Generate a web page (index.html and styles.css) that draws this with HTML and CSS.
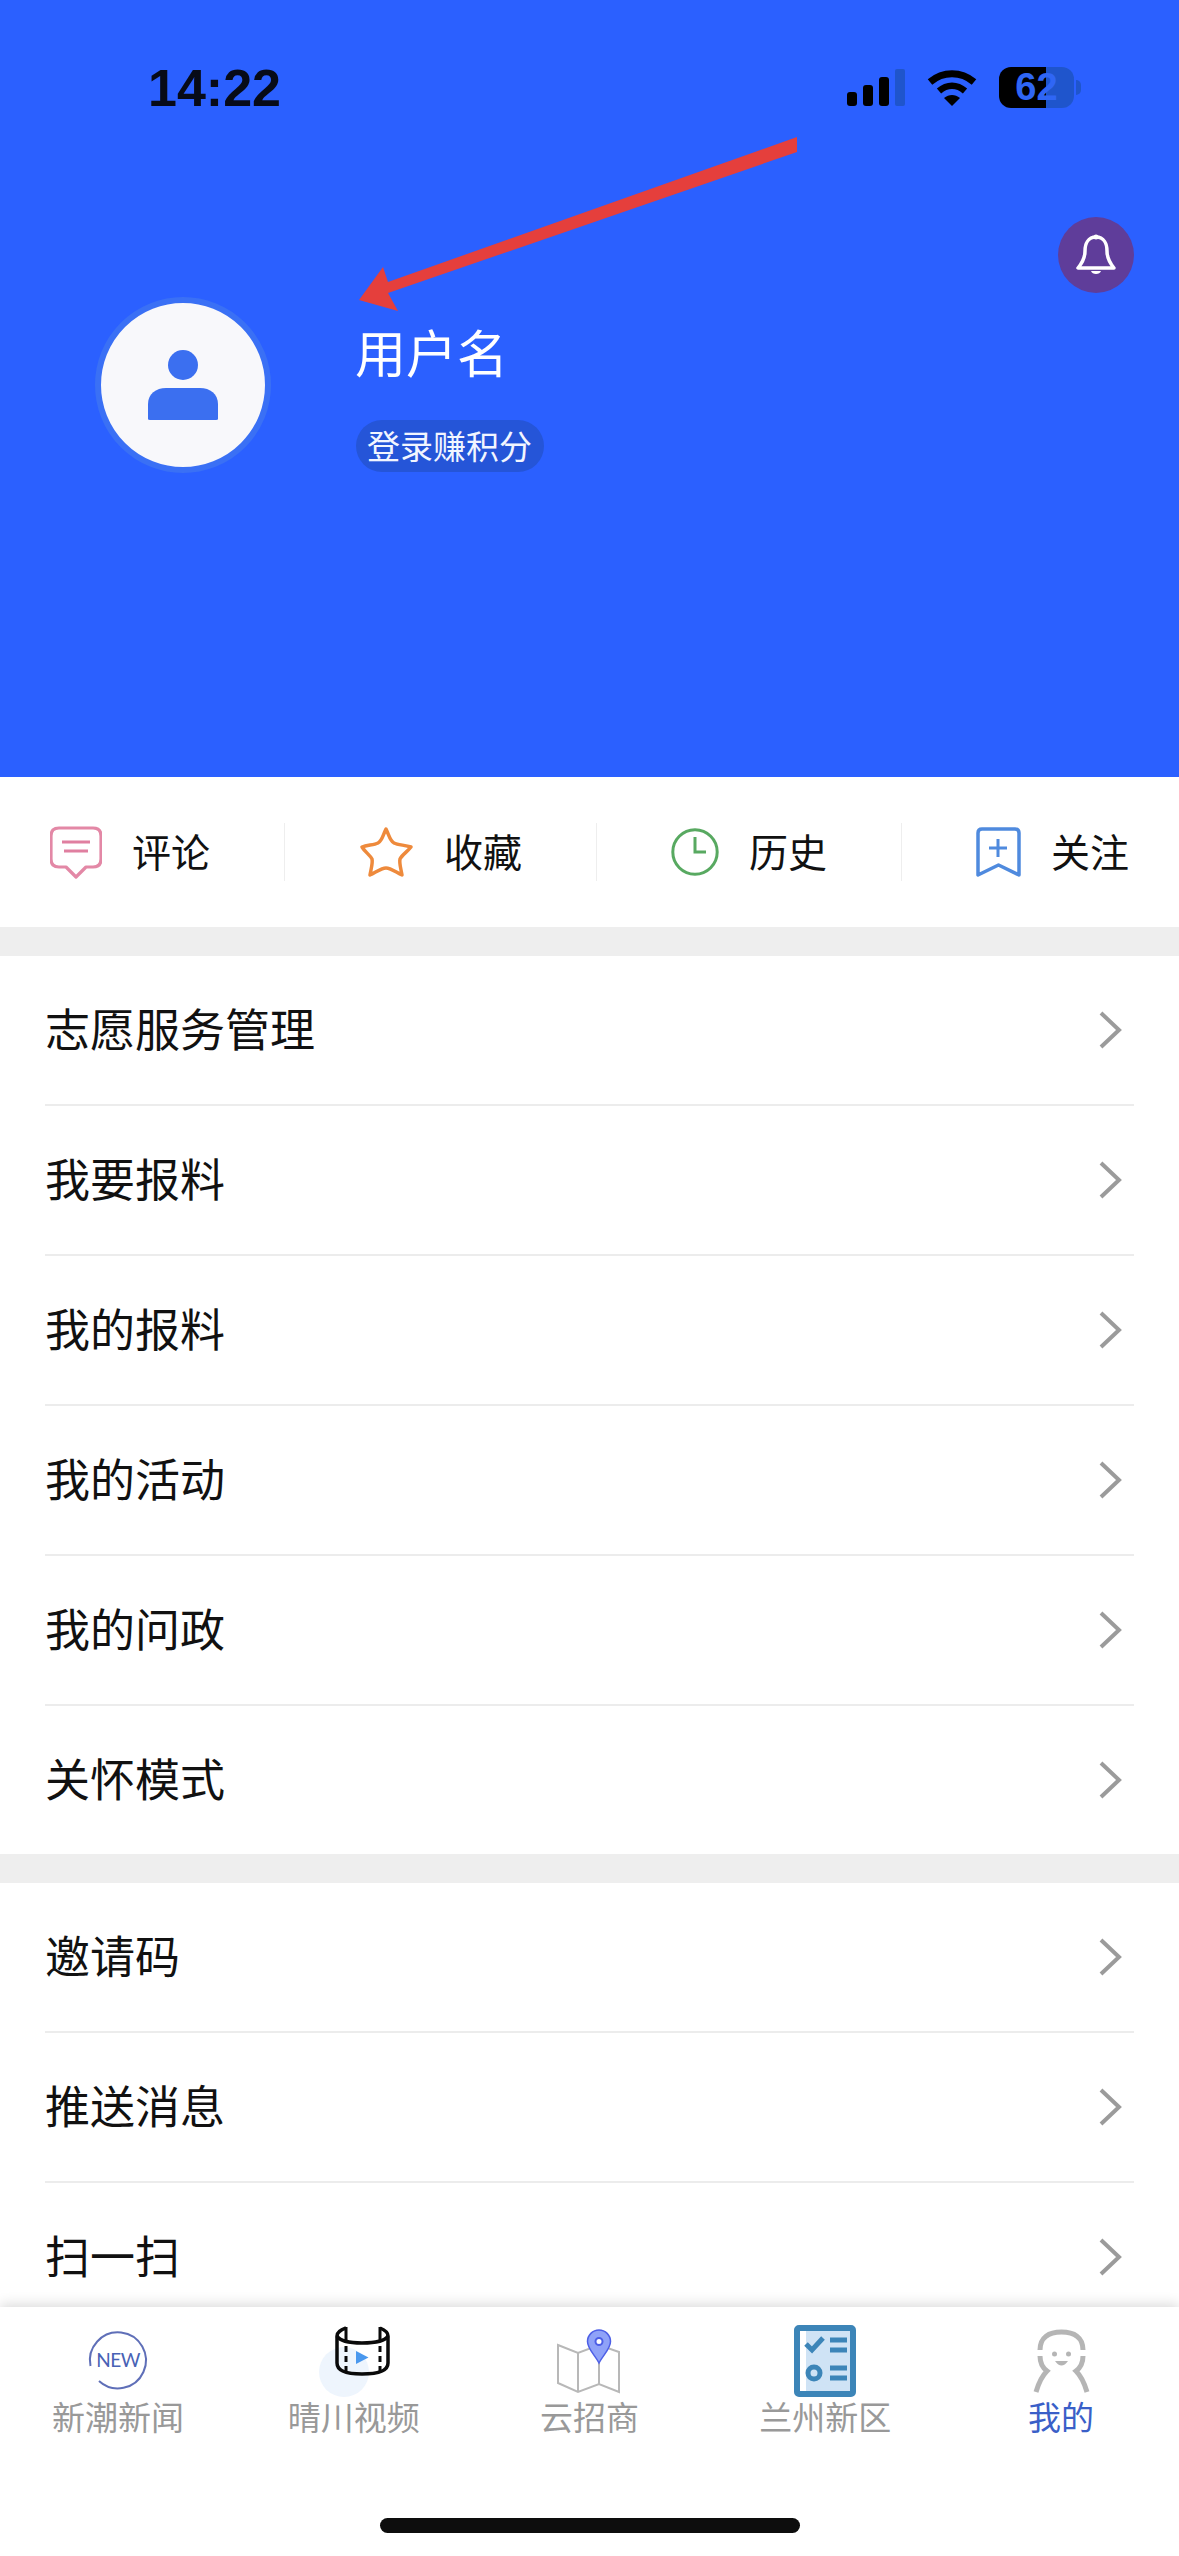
FILE: index.html
```html
<!DOCTYPE html>
<html lang="zh-CN">
<head>
  <meta charset="UTF-8" />
  <meta name="viewport" content="width=device-width, initial-scale=1.0" />
  <title>我的</title>
  <link rel="stylesheet" href="styles.css">
</head>
<body>
  <svg class="defs" width="0" height="0">
    <symbol id="chev" viewBox="0 0 24 38"><path d="M3 2 L21 19 L3 36" fill="none" stroke="#9b9b9b" stroke-width="4"/></symbol>
  </svg>

  <div class="main">
    <div class="header">
      <div class="status-bar">
        <span class="time">14:22</span>
        <div class="status-icons">
          <svg class="signal" width="58" height="37" viewBox="0 0 58 37">
            <rect x="0" y="23" width="10" height="14" rx="3" fill="#000"/>
            <rect x="16" y="16" width="10" height="21" rx="3" fill="#000"/>
            <rect x="32" y="8" width="10" height="29" rx="3" fill="#000"/>
            <rect x="48" y="0" width="10" height="37" rx="2" fill="#1f55cc"/>
          </svg>
          <svg class="wifi" width="50" height="37" viewBox="0 0 50 37">
            <path d="M3 13 C16 2 34 2 47 13" fill="none" stroke="#000" stroke-width="7"/>
            <path d="M12 22 C20 15 30 15 38 22" fill="none" stroke="#000" stroke-width="6.5"/>
            <path d="M17 29 C22 25 28 25 33 29 L25 37 Z" fill="#000"/>
          </svg>
          <div class="battery">62</div>
        </div>
      </div>

      <div class="bell-row">
        <div class="bell">
          <svg width="40" height="44" viewBox="0 0 40 44">
            <path d="M20 4 C12 4 9 11 9 18 C9 25 7 29 2 35 H38 C33 29 31 25 31 18 C31 11 28 4 20 4 Z" fill="none" stroke="#fff" stroke-width="3.5" stroke-linejoin="round"/>
            <path d="M15 38 H25 C24 42 16 42 15 38 Z" fill="#fff"/>
            <circle cx="20" cy="4" r="2.5" fill="#fff"/>
          </svg>
        </div>
      </div>

      <div class="profile">
        <div class="avatar">
          <svg width="70" height="70" viewBox="0 0 70 70">
            <circle cx="35" cy="15" r="15" fill="#3b6ff0"/>
            <path d="M0 69 V54 C0 44 8 38 18 38 H52 C62 38 70 44 70 54 V69 Q70 70 68 70 H2 Q0 70 0 69 Z" fill="#3b6ff0"/>
          </svg>
        </div>
        <div class="profile-text">
          <div class="username">用户名</div>
          <div class="login-pill">登录赚积分</div>
        </div>
      </div>

      <svg class="arrow" width="1179" height="777" viewBox="0 0 1179 777">
        <polygon points="797,137 797,152 388,293 398,311 359,300 383,267 388,282" fill="#e53f3c"/>
      </svg>
    </div>

    <div class="quick-bar">
      <div class="quick-item">
        <svg width="52" height="53" viewBox="1 0 52 53">
          <path d="M10 2 H44 Q52 2 52 10 V33 Q52 41 44 41 H37 L27 51 L17 41 H10 Q2 41 2 33 V10 Q2 2 10 2 Z" fill="none" stroke="#e388a6" stroke-width="3.2" stroke-linejoin="round"/>
          <path d="M13 16 H41 M15 25 H39" stroke="#e07fa0" stroke-width="3.2"/>
        </svg>
        <span>评论</span>
      </div>
      <div class="quick-sep"></div>
      <div class="quick-item">
        <svg width="55" height="52" viewBox="0 0 55 52">
          <path d="M27 3 C30 9 31 15 35 17 C39 19 46 19 52 21 C48 26 43 29 41 33 C40 37 42 43 43 49 C38 47 32 42 27 42 C22 42 16 47 11 49 C12 43 14 37 13 33 C11 29 6 26 3 21 C8 19 15 19 19 17 C23 15 24 9 27 3 Z" fill="none" stroke="#ee8a3c" stroke-width="3.5" stroke-linejoin="round"/>
        </svg>
        <span>收藏</span>
      </div>
      <div class="quick-sep"></div>
      <div class="quick-item">
        <svg width="48" height="48" viewBox="0 0 48 48">
          <circle cx="24" cy="24" r="22.2" fill="none" stroke="#58a961" stroke-width="3"/>
          <path d="M24 9 V24 H35" fill="none" stroke="#58a961" stroke-width="3"/>
        </svg>
        <span>历史</span>
      </div>
      <div class="quick-sep"></div>
      <div class="quick-item">
        <svg width="45" height="50" viewBox="0 0 45 50">
          <path d="M6 2 H39 Q43 2 43 6 V48 L22.5 38 L2 48 V6 Q2 2 6 2 Z" fill="none" stroke="#4f8ade" stroke-width="3.5" stroke-linejoin="round"/>
          <path d="M22 12 V30 M13 21 H31" stroke="#4f8ade" stroke-width="3"/>
        </svg>
        <span>关注</span>
      </div>
    </div>

    <div class="gap"></div>

    <div class="menu-group">
      <div class="menu-row"><span>志愿服务管理</span><svg class="chev"><use href="#chev"/></svg></div>
      <div class="menu-row"><span>我要报料</span><svg class="chev"><use href="#chev"/></svg></div>
      <div class="menu-row"><span>我的报料</span><svg class="chev"><use href="#chev"/></svg></div>
      <div class="menu-row"><span>我的活动</span><svg class="chev"><use href="#chev"/></svg></div>
      <div class="menu-row"><span>我的问政</span><svg class="chev"><use href="#chev"/></svg></div>
      <div class="menu-row"><span>关怀模式</span><svg class="chev"><use href="#chev"/></svg></div>
    </div>

    <div class="gap"></div>

    <div class="menu-group">
      <div class="menu-row"><span>邀请码</span><svg class="chev"><use href="#chev"/></svg></div>
      <div class="menu-row"><span>推送消息</span><svg class="chev"><use href="#chev"/></svg></div>
      <div class="menu-row"><span>扫一扫</span><svg class="chev"><use href="#chev"/></svg></div>
    </div>
  </div>

  <div class="tabbar">
    <div class="tabs">
      <div class="tab">
        <svg width="80" height="76" viewBox="0 0 80 76">
          <path d="M12.5 41 A28 28 0 1 1 21 56" fill="none" stroke="#5f6fb8" stroke-width="2"/>
          <text class="new-label" x="40" y="42" text-anchor="middle">NEW</text>
        </svg>
        <span>新潮新闻</span>
      </div>
      <div class="tab">
        <svg width="80" height="76" viewBox="0 0 80 76">
          <circle cx="30" cy="47" r="25" fill="#eef5fd"/>
          <path d="M32 3 C26 5 23 7 23 11 V38 C23 45 30 49 48 49 C66 49 74 45 74 38 V11 C74 7 71 5 66 3" fill="none" stroke="#0a0a0a" stroke-width="3.5"/>
          <path d="M23 11 C26 16 36 18 48 18 C60 18 71 16 74 11" fill="none" stroke="#0a0a0a" stroke-width="3.5"/>
          <path d="M32 2 V15 M66 2 V15" stroke="#0a0a0a" stroke-width="3"/>
          <path d="M32 21 V47 M66 21 V47" stroke="#0a0a0a" stroke-width="3" stroke-dasharray="6 4"/>
          <polygon points="42,26 54.5,32.5 42,39" fill="#4a98ee"/>
        </svg>
        <span>晴川视频</span>
      </div>
      <div class="tab">
        <svg width="80" height="76" viewBox="0 0 80 76">
          <path d="M9 20 L29 28 L50 20 L70 27 V67 L50 59 L29 67 L9 58 Z M29 28 V67 M50 38 V59" fill="none" stroke="#b8b8b8" stroke-width="2"/>
          <path d="M50 38 C46 30 38.5 24 38.5 16.5 A11.5 11.5 0 0 1 61.5 16.5 C61.5 24 54 30 50 38 Z" fill="#8fa2f8" stroke="#4d5fe6" stroke-width="1.5"/>
          <circle cx="50" cy="16.5" r="3.5" fill="#fff" stroke="#4d5fe6" stroke-width="2"/>
        </svg>
        <span>云招商</span>
      </div>
      <div class="tab">
        <svg width="80" height="76" viewBox="0 0 80 76">
          <rect x="12" y="3" width="56" height="66" rx="2" fill="#fff" stroke="#3c85b8" stroke-width="6"/>
          <rect x="21" y="6" width="44" height="60" fill="#cfe3f5"/>
          <path d="M21 19 L27 25 L38 13" fill="none" stroke="#3c85b8" stroke-width="5"/>
          <path d="M45 15 H62 M45 25 H62 M45 43 H62 M45 53 H62" stroke="#3c85b8" stroke-width="5"/>
          <circle cx="29" cy="48" r="6" fill="none" stroke="#3c85b8" stroke-width="5"/>
        </svg>
        <span>兰州新区</span>
      </div>
      <div class="tab tab-active">
        <svg width="80" height="76" viewBox="0 0 80 76">
          <path d="M19 25 C19 12 28 7 40.5 7 C53 7 62 12 62 25 M19 31 C19 38 22 43 26 46 C20 52 17 60 15 67 M62 31 C62 38 59 43 55 46 C61 52 64 60 66 67" fill="none" stroke="#b5b5b5" stroke-width="5"/>
          <circle cx="33.5" cy="29" r="2.5" fill="#b5b5b5"/>
          <circle cx="47.5" cy="29" r="2.5" fill="#b5b5b5"/>
          <path d="M34 36 Q40.5 45 47 36 Z" fill="#b5b5b5"/>
        </svg>
        <span>我的</span>
      </div>
    </div>
    <div class="home-indicator"></div>
  </div>
</body>
</html>
```

FILE: styles.css
```css
body {
  margin: 0;
  width: 1179px;
  height: 2556px;
  overflow: hidden;
  display: flex;
  flex-direction: column;
  background: #fff;
  color: #111;
  font-family: "Noto Sans CJK SC", "Liberation Sans", sans-serif;
}
.defs {
  position: absolute;
}
.main {
  flex: 1;
  min-height: 0;
  overflow: hidden;
}

/* header */
.header {
  position: relative;
  height: 777px;
  background: #2b60ff;
}
.status-bar {
  display: flex;
  justify-content: space-between;
  align-items: center;
  height: 41px;
  padding: 67px 105px 0 148px;
}
.time {
  font-family: "Liberation Sans", sans-serif;
  font-weight: 700;
  font-size: 52px;
  color: #070b18;
}
.status-icons {
  display: flex;
  align-items: center;
  gap: 22px;
}
.battery {
  position: relative;
  width: 75px;
  height: 41px;
  border-radius: 12px;
  background: linear-gradient(90deg, #000 47px, #1f55cc 47px);
  color: #2f66f5;
  font-family: "Liberation Sans", sans-serif;
  font-weight: 700;
  font-size: 38px;
  line-height: 41px;
  text-align: center;
}
.battery::after {
  content: "";
  position: absolute;
  right: -7px;
  top: 13px;
  width: 5px;
  height: 15px;
  border-radius: 0 5px 5px 0;
  background: #1f55cc;
}
.bell-row {
  display: flex;
  justify-content: flex-end;
  padding-right: 45px;
  margin-top: 109px;
}
.bell {
  width: 76px;
  height: 76px;
  border-radius: 50%;
  background: #5f3d9a;
  display: flex;
  align-items: center;
  justify-content: center;
}
.profile {
  display: flex;
  align-items: flex-start;
  gap: 84px;
  padding-left: 95px;
  margin-top: 4px;
}
.avatar {
  width: 164px;
  height: 164px;
  border: 6px solid #3a70f5;
  border-radius: 50%;
  background: #f8f8fb;
  display: flex;
  align-items: center;
  justify-content: center;
}
.profile-text {
  margin-top: 24px;
}
.username {
  font-size: 51px;
  line-height: 60px;
  color: #fff;
}
.login-pill {
  width: 166px;
  height: 50px;
  margin-top: 39px;
  margin-left: 1px;
  padding: 0 11px 2px;
  border-radius: 26px;
  background: #2555d8;
  color: #f2f5ff;
  font-size: 33px;
  line-height: 50px;
  white-space: nowrap;
}
.arrow {
  position: absolute;
  left: 0;
  top: 0;
}

/* quick links */
.quick-bar {
  display: flex;
  align-items: center;
  gap: 75px;
  height: 150px;
  padding: 0 50px;
}
.quick-item {
  display: flex;
  align-items: center;
  gap: 30px;
  font-size: 39px;
  white-space: nowrap;
}
.quick-item span {
  margin-bottom: 5px;
}
.quick-sep {
  width: 2px;
  height: 58px;
  margin-left: -1px;
  margin-right: -1px;
  background: #eee;
}
.gap {
  height: 29px;
  background: #eee;
}

/* menu */
.menu-row {
  display: flex;
  align-items: center;
  justify-content: space-between;
  height: 148px;
  margin: 0 45px;
  padding: 0 12px 0 0;
  border-bottom: 2px solid #ececec;
  font-size: 45px;
}
.menu-row span {
  margin-bottom: 5px;
}
.menu-row:last-child {
  border-bottom: none;
}
.chev {
  width: 24px;
  height: 38px;
}

/* tab bar */
.tabbar {
  position: relative;
  height: 249px;
  flex: none;
  background: #fff;
  box-shadow: 0 -3px 12px rgba(0, 0, 0, 0.14);
}
.tabs {
  display: flex;
  padding-top: 18px;
}
.tab {
  flex: 1;
  display: flex;
  flex-direction: column;
  align-items: center;
  font-size: 33px;
  line-height: 36px;
  color: #999;
}
.tab span {
  margin-top: -3px;
  margin-bottom: 3px;
}
.tab svg {
  display: block;
}
.tab-active {
  color: #3a5fc8;
}
.new-label {
  font-family: Lato, sans-serif;
  font-size: 19px;
  letter-spacing: -0.5px;
  fill: #4862b5;
}
.home-indicator {
  width: 420px;
  height: 15px;
  margin: 81px auto 0;
  border-radius: 8px;
  background: #0d0d0d;
}
```
